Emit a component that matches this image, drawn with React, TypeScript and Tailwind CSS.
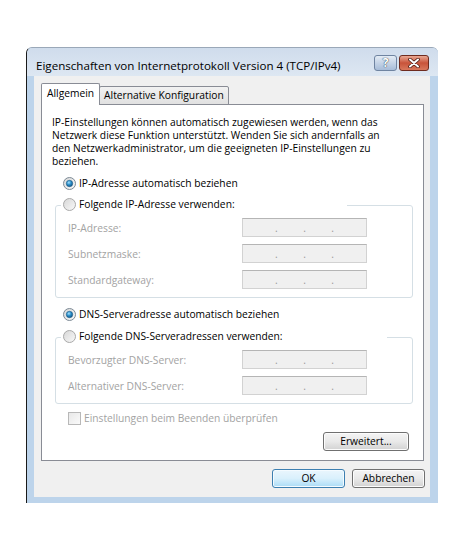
import React from "react";

// Win7 style radio button
function Radio({ on }: { on?: boolean }) {
  return (
    <svg width="13" height="13" viewBox="0 0 13 13" className="shrink-0">
      <defs>
        <linearGradient id="radioBg" x1="0" y1="0" x2="1" y2="1">
          <stop offset="0" stopColor="#d6d6d6" />
          <stop offset="1" stopColor="#fafafa" />
        </linearGradient>
        <radialGradient id="radioDot" cx="0.4" cy="0.35" r="0.75">
          <stop offset="0" stopColor="#a6e2ff" />
          <stop offset="0.45" stopColor="#2b8fca" />
          <stop offset="1" stopColor="#0c4a78" />
        </radialGradient>
      </defs>
      <circle cx="6.5" cy="6.5" r="6" fill="url(#radioBg)" stroke={on ? "#7d8a96" : "#a9a9a9"} />
      {on && <circle cx="6.5" cy="6.5" r="3.2" fill="url(#radioDot)" stroke="#1d5a86" strokeWidth="0.6" />}
    </svg>
  );
}

function RadioRow({ on, label, className = "" }: { on?: boolean; label: string; className?: string }) {
  return (
    <div className={`flex h-[16px] items-center gap-[3px] whitespace-nowrap ${className}`}>
      <Radio on={on} />
      <span>{label}</span>
    </div>
  );
}

function IpField() {
  return (
    <div className="flex h-[19px] w-[125px] items-center justify-between border border-[#d2d2d2] border-t-[#b5b5b5] bg-[#f0f0f0] px-[32px] pt-[1px] text-[#9a9a9a]">
      <span>.</span>
      <span>.</span>
      <span>.</span>
    </div>
  );
}

function FieldRow({ label }: { label: string }) {
  return (
    <div className="flex items-center">
      <span className="w-[174px] whitespace-nowrap pt-[2px] text-[#a3a3a3]">{label}</span>
      <IpField />
    </div>
  );
}

function Btn({ children, primary, w }: { children: React.ReactNode; primary?: boolean; w: string }) {
  return (
    <div
      className={
        primary
          ? `flex h-[19px] ${w} items-center justify-center rounded-[3px] border border-[#3c7fb1] bg-gradient-to-b from-[#eaf6fd] via-[#d9f0fc] to-[#a9dbf6] shadow-[inset_0_0_0_1px_#f4fbff]`
          : `flex h-[19px] ${w} items-center justify-center rounded-[3px] border border-[#707070] bg-gradient-to-b from-[#f4f4f4] via-[#e9e9e9] to-[#d2d2d2] shadow-[inset_0_0_0_1px_#fcfcfc]`
      }
    >
      {children}
    </div>
  );
}

// group box whose caption is a radio button laid over the top border
function GroupBox({ caption, capWidth, className, children }: { caption: string; capWidth: string; className: string; children: React.ReactNode }) {
  return (
    <div className={`ml-[13px] w-[358px] rounded-[3px] border border-[#d5dfe5] pb-[8px] pl-[12px] ${className}`}>
      <div className={`-ml-[7px] -mt-[10px] bg-white pl-[2px] ${capWidth}`}>
        <RadioRow label={caption} />
      </div>
      <div className="mt-[6px] flex flex-col gap-[7px]">{children}</div>
    </div>
  );
}

export default function App() {
  return (
    <div className="min-h-[553px] w-full bg-white pl-[26px] pt-[47px] font-['Open_Sans','Noto_Sans',sans-serif] text-[10.25px] leading-[13px] text-black">
      <div className="flex h-[456px] w-[412px] flex-col overflow-hidden rounded-t-[6px] border-l border-t border-l-[#1a1a1a] border-t-[#9aa8b8] bg-[#bdd4eb]">
        {/* title bar */}
        <div className="flex h-[28px] shrink-0 items-start bg-gradient-to-b from-[#cfdcec] to-[#dde7f2]">
          <div className="whitespace-nowrap pl-[9px] pt-[11px] text-[11.6px] leading-[14px]">
            Eigenschaften von Internetprotokoll Version 4 (TCP/IPv4)
          </div>
          <div className="ml-auto mr-[9px] mt-[7px] flex gap-[2px]">
            <div className="flex h-[16px] w-[23px] items-center justify-center rounded-[3px] border border-[#6f84a1] bg-gradient-to-b from-[#e4ecf5] via-[#c4d3e6] to-[#a7bcd8] text-[12px] font-bold leading-none text-white [text-shadow:0_0_1px_#2c3a4c,0_0_1px_#2c3a4c]">
              ?
            </div>
            <div className="flex h-[16px] w-[30px] items-center justify-center rounded-[3px] border border-[#6e2b1f] bg-gradient-to-b from-[#e8a793] via-[#c8533a] to-[#d8785c]">
              <svg width="12" height="10" viewBox="0 0 12 10">
                <path d="M2 1.5 L10 8.5 M10 1.5 L2 8.5" stroke="#4a1a12" strokeWidth="3.6" strokeLinecap="round" />
                <path d="M2 1.5 L10 8.5 M10 1.5 L2 8.5" stroke="#ffffff" strokeWidth="2" strokeLinecap="round" />
              </svg>
            </div>
          </div>
        </div>

        {/* client area */}
        <div className="mb-[6px] ml-[7px] mr-[8px] flex flex-1 flex-col bg-[#f0f0f0] pl-[7px] pr-[6px] pt-[7px]">
          {/* tabs */}
          <div className="relative z-10 -mb-[1px] flex items-end">
            <div className="h-[22px] rounded-t-[2px] border border-b-0 border-[#898c95] bg-white px-[5px] pt-[3px]">
              Allgemein
            </div>
            <div className="-ml-[1px] h-[19px] rounded-t-[2px] border border-[#898c95] bg-gradient-to-b from-[#f2f2f2] to-[#e1e1e1] px-[4px] pt-[2px]">
              Alternative Konfiguration
            </div>
          </div>

          {/* panel */}
          <div className="flex h-[357px] flex-col border border-[#898c95] bg-white">
            <p className="ml-[10px] mt-[11px] whitespace-nowrap">
              IP-Einstellungen können automatisch zugewiesen werden, wenn das
              <br />
              Netzwerk diese Funktion unterstützt. Wenden Sie sich andernfalls an
              <br />
              den Netzwerkadministrator, um die geeigneten IP-Einstellungen zu
              <br />
              beziehen.
            </p>

            <div className="ml-[21px] mt-[7px]">
              <RadioRow on label="IP-Adresse automatisch beziehen" />
            </div>

            <GroupBox caption="Folgende IP-Adresse verwenden:" capWidth="w-[286px]" className="mt-[14px]">
              <FieldRow label="IP-Adresse:" />
              <FieldRow label="Subnetzmaske:" />
              <FieldRow label="Standardgateway:" />
            </GroupBox>

            <div className="ml-[21px] mt-[8px]">
              <RadioRow on label="DNS-Serveradresse automatisch beziehen" />
            </div>

            <GroupBox caption="Folgende DNS-Serveradressen verwenden:" capWidth="w-[326px]" className="mt-[15px]">
              <FieldRow label="Bevorzugter DNS-Server:" />
              <FieldRow label="Alternativer DNS-Server:" />
            </GroupBox>

            <div className="ml-[26px] mt-[8px] flex h-[13px] items-center gap-[3px] whitespace-nowrap text-[#a3a3a3]">
              <div className="h-[13px] w-[13px] border border-[#b8b8b8] bg-gradient-to-br from-[#e8e8e8] to-[#fafafa]" />
              <span>Einstellungen beim Beenden überprüfen</span>
            </div>

            <div className="mr-[14px] mt-[7px] flex justify-end">
              <Btn w="w-[86px]">Erweitert...</Btn>
            </div>
          </div>

          {/* dialog buttons */}
          <div className="-mr-[1px] mt-[8px] flex justify-end gap-[7px]">
            <Btn primary w="w-[73px]">
              OK
            </Btn>
            <Btn w="w-[73px]">Abbrechen</Btn>
          </div>
        </div>
      </div>
    </div>
  );
}
